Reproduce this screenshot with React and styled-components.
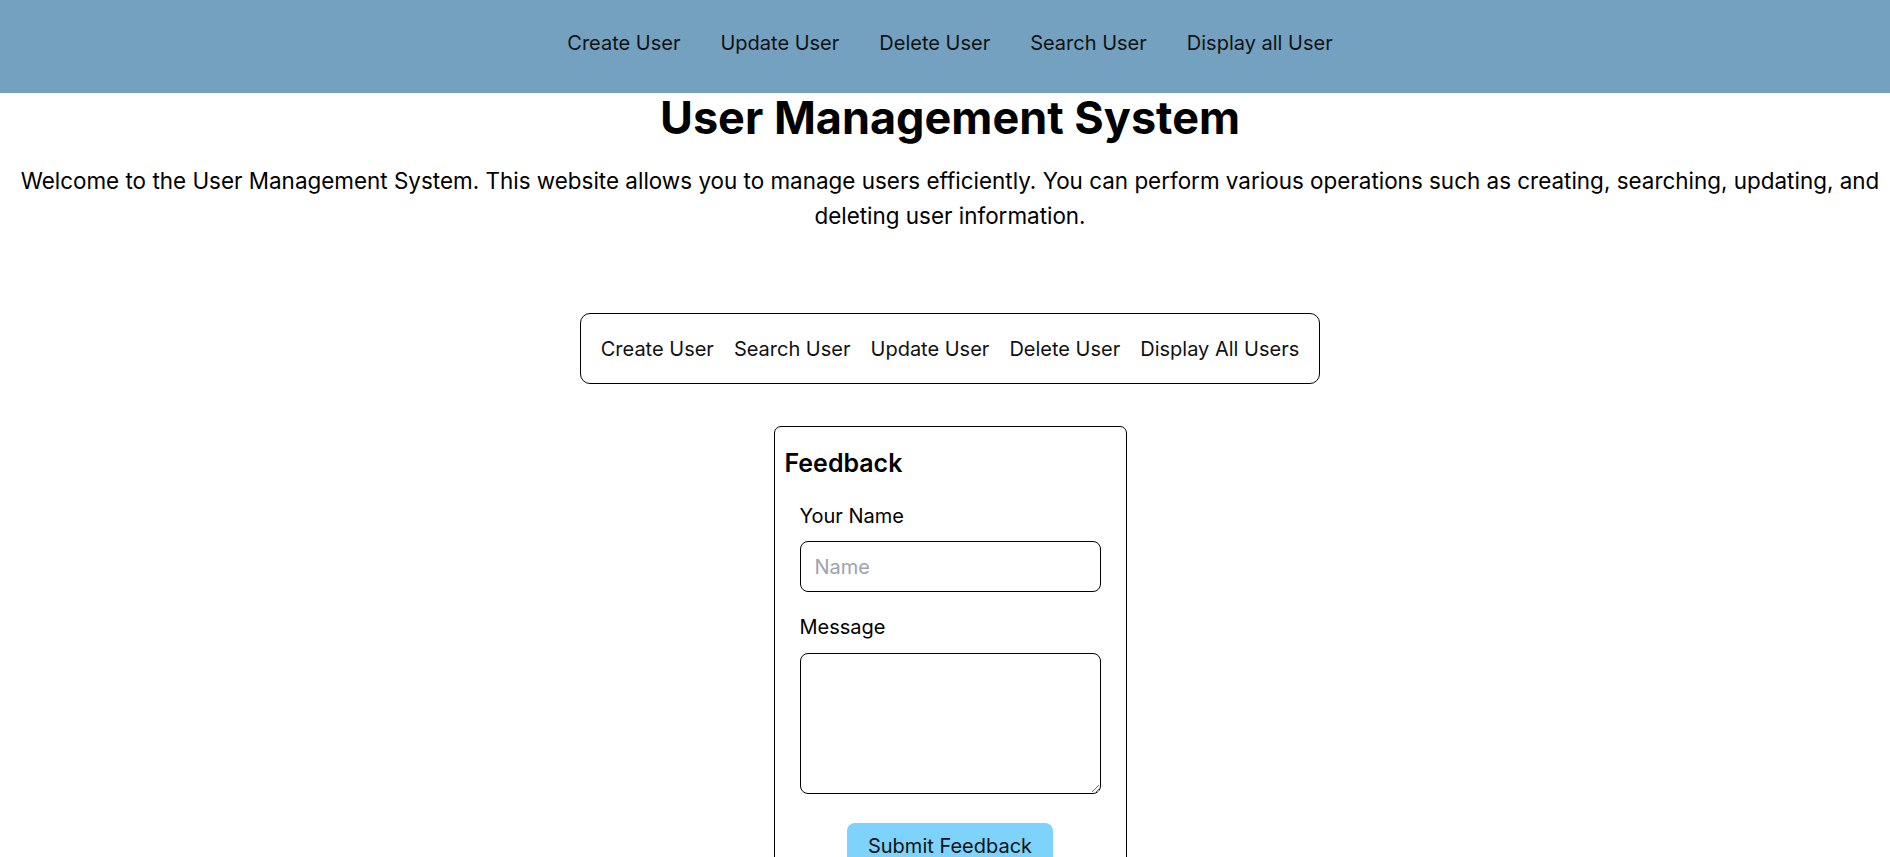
import React from "react";
import styled, { createGlobalStyle } from "styled-components";

const GlobalStyle = createGlobalStyle`
  html, body {
    margin: 0;
    padding: 0;
    background: #ffffff;
  }
  body {
    font-family: Inter, "Noto Sans", Roboto, sans-serif;
    color: #000;
    font-size: 20px;
  }
  *, *::before, *::after { box-sizing: border-box; }
`;

const Page = styled.div`
  width: 100%;
`;

const NavBar = styled.nav`
  background: #73a1bf;
  height: 93px;
  padding: 31.3px 0 0 10px;
`;

const NavList = styled.div`
  display: flex;
  justify-content: center;
  gap: 40px;
`;

const NavLink = styled.a`
  font-size: 20px;
  line-height: 24.2px;
  color: #111;
  text-decoration: none;
  cursor: pointer;
`;

const Main = styled.main`
  padding-left: 10px;
  padding-bottom: 40px;
`;

const Title = styled.h1`
  margin: 0;
  font-size: 45px;
  line-height: 49px;
  font-weight: 700;
  text-align: center;
`;

const Intro = styled.p`
  margin: 22px 0 0;
  font-size: 22.45px;
  line-height: 34.5px;
  text-align: center;
`;

const ActionBox = styled.div`
  display: flex;
  gap: 20px;
  width: fit-content;
  margin: 80.3px auto 0;
  padding: 22.4px 20px;
  border: 1px solid #000;
  border-radius: 10px;
`;

const ActionLink = styled.a`
  font-size: 20px;
  line-height: 24.2px;
  color: #111;
  cursor: pointer;
`;

const Card = styled.section`
  width: 353px;
  margin: 41.3px auto 0;
  padding: 10px;
  border: 1px solid #000;
  border-radius: 7px;
`;

const CardTitle = styled.h3`
  margin: 11px 0 0;
  font-size: 24.96px;
  line-height: 30.2px;
  font-weight: 600;
`;

const Form = styled.form`
  display: flex;
  flex-direction: column;
  gap: 23.3px;
  padding: 0 15px;
  margin-top: 25.9px;
`;

const Field = styled.div`
  display: flex;
  flex-direction: column;
  gap: 13.6px;
`;

const Label = styled.label`
  font-size: 20px;
  line-height: 24.2px;
`;

const fieldBase = `
  width: 100%;
  font-family: Inter, "Noto Sans", sans-serif;
  font-size: 20px;
  line-height: 24.2px;
  padding: 12.2px 14px;
  border: 1px solid #000;
  border-radius: 8px;
  background: #fff;
  color: #000;
  outline: none;
  &::placeholder { color: #9ca3af; }
`;

const TextInput = styled.input`
  ${fieldBase}
  height: 50.6px;
`;

const TextArea = styled.textarea`
  ${fieldBase}
  display: block;
  height: 141px;
  resize: both;
`;

const ButtonRow = styled.div`
  display: flex;
  justify-content: center;
  margin-top: 5.4px;
`;

const SubmitButton = styled.button`
  font-family: Inter, "Noto Sans", sans-serif;
  font-size: 20px;
  line-height: 24.2px;
  color: #111;
  background: #7dd3fc;
  border: none;
  border-radius: 8px;
  padding: 11.6px 21px;
  cursor: pointer;
`;

const topLinks = ["Create User", "Update User", "Delete User", "Search User", "Display all User"];
const actionLinks = ["Create User", "Search User", "Update User", "Delete User", "Display All Users"];

export default function App() {
  return (
    <Page>
      <GlobalStyle />
      <NavBar>
        <NavList>
          {topLinks.map((l) => (
            <NavLink key={l}>{l}</NavLink>
          ))}
        </NavList>
      </NavBar>
      <Main>
        <Title>User Management System</Title>
        <Intro>
          Welcome to the User Management System. This website allows you to manage users efficiently. You can perform various operations such as creating, searching, updating, and deleting user information.
        </Intro>
        <ActionBox>
          {actionLinks.map((l) => (
            <ActionLink key={l}>{l}</ActionLink>
          ))}
        </ActionBox>
        <Card>
          <CardTitle>Feedback</CardTitle>
          <Form onSubmit={(e) => e.preventDefault()}>
            <Field>
              <Label htmlFor="fb-name">Your Name</Label>
              <TextInput id="fb-name" type="text" placeholder="Name" />
            </Field>
            <Field>
              <Label htmlFor="fb-msg">Message</Label>
              <TextArea id="fb-msg" />
            </Field>
            <ButtonRow>
              <SubmitButton type="submit">Submit Feedback</SubmitButton>
            </ButtonRow>
          </Form>
        </Card>
      </Main>
    </Page>
  );
}
